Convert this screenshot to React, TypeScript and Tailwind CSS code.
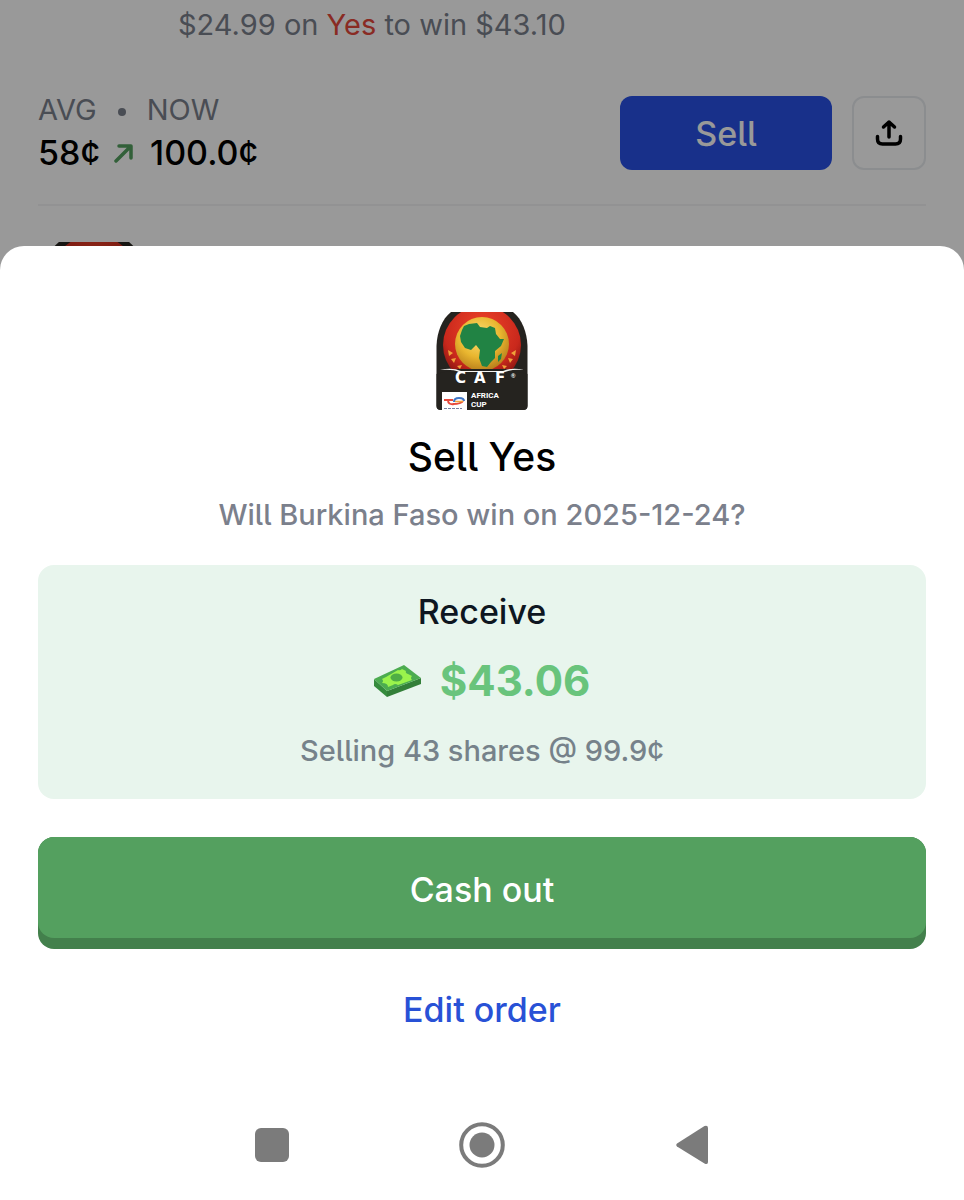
interface IconProps {
  className?: string;
}

interface CafBadgeProps extends IconProps {
  lettering?: boolean;
}

function CafBadge({ className, lettering = true }: CafBadgeProps) {
  return (
    <svg viewBox="0 0 92 98" className={className} role="img" aria-label="CAF Africa Cup">
      <defs>
        <radialGradient id="ring" cx="50%" cy="30%" r="65%">
          <stop offset="0" stopColor="#f0452a" />
          <stop offset="0.75" stopColor="#c9281c" />
          <stop offset="1" stopColor="#8f1712" />
        </radialGradient>
        <radialGradient id="globe" cx="45%" cy="35%" r="65%">
          <stop offset="0" stopColor="#fbe27a" />
          <stop offset="0.6" stopColor="#e9b62f" />
          <stop offset="1" stopColor="#b9801c" />
        </radialGradient>
        <clipPath id="shield">
          <path d="M15 0H77C86 7 91 20 91.500 34V94Q91.500 98 87 98H5Q0.500 98 0.500 94V34C1 20 6 7 15 0Z" />
        </clipPath>
      </defs>
      <g clipPath="url(#shield)">
        <rect width="92" height="98" fill="#25231f" />
        <circle cx="46" cy="33" r="39" fill="url(#ring)" />
        <g fill="#f0a13a">
          <path d="M12 38l5 3-4 3zM15 47l5-1-2 5zM21 54l5-1-2 4zM80 38l-5 3 4 3zM77 47l-5-1 2 5zM71 54l-5-1 2 4z" />
        </g>
        <circle cx="46" cy="32" r="27" fill="url(#globe)" />
        <path
          d="M28 14L33 12L41 11L44 15L51 16L54 14L59 16L60 22L64 27H68L65 34L59 39V46L55 50L51 55L46 54L43 46L44 38L40 33L35 38L29 36L25 30L24 24L26 18Z"
          fill="#218344"
        />
        <path d="M62 44l4-3-1 6-3 3z" fill="#218344" />
        <path d="M0 62L22 57H70L92 62V98H0Z" fill="#25231f" />
        <path d="M4 58Q16 55 25 59H67Q76 55 88 58Q76 57 69 60H23Q17 57 4 58Z" fill="#f4f4f0" />
        <rect x="6" y="80" width="25" height="18" fill="#fff" />
        <path d="M8 88H17M12 88Q12 93 18 92" fill="none" stroke="#e5483b" strokeWidth="2" />
        <path d="M17 92Q25 92 27 89" fill="none" stroke="#e5483b" strokeWidth="2" />
        <path d="M18 90Q18 86 23 86Q28 86 28 89" fill="none" stroke="#3f75c4" strokeWidth="2" />
        <path d="M19 89.500H27" fill="none" stroke="#f2a43c" strokeWidth="1.500" />
        <path d="M8 96.500h18" stroke="#777fa0" strokeDasharray="3 1" />
      </g>
      {lettering && (
        <g fill="#fff" fontWeight="700">
          <g fontFamily="DejaVu Sans, sans-serif" fontSize="15">
            <text x="19" y="71">C</text>
            <text x="38" y="71">A</text>
            <text x="59" y="71">F</text>
          </g>
          <text x="75" y="66" fontFamily="Liberation Sans, sans-serif" fontSize="6">®</text>
          <g fontFamily="Roboto, sans-serif" fontSize="8">
            <text x="35" y="86">AFRICA</text>
            <text x="35" y="95">CUP</text>
          </g>
        </g>
      )}
    </svg>
  );
}

function CashIcon({ className }: IconProps) {
  return (
    <svg viewBox="0 0 48 34" className={className} aria-hidden="true">
      <path d="M0 15L13 27V33L0 22Z" fill="#358b3d" />
      <path d="M13 27L47 14V20L13 33Z" fill="#337f39" />
      <path d="M0 15L30 1L47 14L13 27Z" fill="#4cac50" />
      <path
        d="M8 15L12 13L24 6Q26 7 28 5L32 7Q31 9 34 10L38 12Q36 14 38 16L24 21Q21 19 19 21L14 23Q14 19 8 19Q10 17 8 15Z"
        fill="#9af34c"
      />
      <ellipse cx="22.500" cy="13.500" rx="6" ry="4" fill="#4fae45" />
    </svg>
  );
}

function TrendIcon({ className }: IconProps) {
  return (
    <svg viewBox="0 0 20 20" className={className} aria-hidden="true">
      <path
        d="M2 18L16 4M5 3H17V15"
        fill="none"
        stroke="currentColor"
        strokeWidth="3.500"
        strokeLinecap="round"
        strokeLinejoin="round"
      />
    </svg>
  );
}

function ShareIcon({ className }: IconProps) {
  return (
    <svg viewBox="0 0 28 28" className={className} aria-hidden="true">
      <path
        d="M14 18V3M8.500 8L14 3L19.500 8M2.500 17.500V20Q2.500 25 7.500 25H20.500Q25.500 25 25.500 20V17.500"
        fill="none"
        stroke="currentColor"
        strokeWidth="3.500"
        strokeLinecap="round"
        strokeLinejoin="round"
      />
    </svg>
  );
}

function Position() {
  return (
    <section className="px-[38px] pt-1">
      <p className="pl-[140px] text-[29px] leading-[42px] text-[#7b808c]">
        $24.99 on <span className="text-[#e5483b]">Yes</span> to win $43.10
      </p>
      <div className="mt-[42px] flex items-end justify-between">
        <div className="pb-1 leading-[43px]">
          <div className="flex items-center text-[29px] text-[#7b808c]">
            <span>AVG</span>
            <span className="mx-[21px] mt-1 size-2 rounded-full bg-[#7b808c]" />
            <span>NOW</span>
          </div>
          <div className="flex items-center text-[34px] font-medium text-black">
            <span>58¢</span>
            <TrendIcon className="mr-4 ml-[14px] size-5 text-[#54a05f]" />
            <span>100.0¢</span>
          </div>
        </div>
        <div className="flex gap-5 pb-2">
          <button className="h-[74px] w-[212px] rounded-xl bg-[#2851e6] text-[34px] font-medium text-white">Sell</button>
          <button
            aria-label="Share"
            className="flex size-[74px] items-center justify-center rounded-xl border-2 border-[#e8ebee] text-black"
          >
            <ShareIcon className="size-7" />
          </button>
        </div>
      </div>
      <hr className="mt-[26px] border-t-2 border-[#f3f4f5]" />
      <div className="mt-9 ml-1 h-1 overflow-hidden">
        <CafBadge className="w-26" lettering={false} />
      </div>
    </section>
  );
}

function SellSheet() {
  return (
    <section
      role="dialog"
      aria-label="Sell Yes"
      className="relative flex flex-1 flex-col rounded-t-3xl bg-white px-[38px] pt-[66px] text-center"
    >
      <CafBadge className="w-[92px] self-center" />
      <h1 className="mt-[23px] text-[39px] leading-[48px] font-medium text-black">Sell Yes</h1>
      <p className="mt-[14px] text-[29px] leading-10 font-medium text-[#7b808c]">
        Will Burkina Faso win on 2025-12-24?
      </p>

      <div className="mt-[30px] rounded-2xl bg-[#e8f5ed] pt-[25px] pb-7">
        <h2 className="text-[34px] leading-[44px] font-medium text-[#0e1621]">Receive</h2>
        <div className="mt-[19px] flex items-center justify-center gap-[18px]">
          <CashIcon className="w-12" />
          <span className="text-[42px] leading-[56px] font-bold text-[#69c47c]">$43.06</span>
        </div>
        <p className="mt-[22px] text-[29px] leading-10 font-medium text-[#76828a]">Selling 43 shares @ 99.9¢</p>
      </div>

      <button className="mt-[38px] h-28 rounded-2xl bg-[#43804c] pb-[11px] text-[34px] font-medium text-white">
        <span className="flex h-full items-center justify-center rounded-2xl bg-[#54a05f] pt-1">Cash out</span>
      </button>
      <button className="mt-[39px] self-center text-[34px] leading-[44px] font-medium text-[#2851d6]">
        Edit order
      </button>

      <nav className="mx-auto mt-auto mb-8 grid w-[71%] grid-cols-3 items-center justify-items-center text-[#7b7b7b]">
        <button aria-label="Recent apps">
          <svg viewBox="0 0 34 34" className="size-[34px]" fill="currentColor">
            <rect width="34" height="34" rx="6" />
          </svg>
        </button>
        <button aria-label="Home">
          <svg viewBox="0 0 46 46" className="size-[46px]" fill="currentColor">
            <circle cx="23" cy="23" r="20.800" fill="none" stroke="currentColor" strokeWidth="4" />
            <circle cx="23" cy="23" r="12.500" />
          </svg>
        </button>
        <button aria-label="Back">
          <svg viewBox="0 0 32 40" className="h-10 w-8" fill="currentColor">
            <path d="M1 18.500L28.500 1Q32 0 32 3V37Q32 40 28.500 38.500L1 21.500Q-0.500 20 1 18.500Z" />
          </svg>
        </button>
      </nav>
    </section>
  );
}

export default function App() {
  return (
    <main className="relative flex min-h-screen flex-col bg-white font-['Inter',sans-serif] [font-feature-settings:'cv05']">
      <Position />
      <div className="absolute inset-0 bg-black/40" />
      <SellSheet />
    </main>
  );
}
